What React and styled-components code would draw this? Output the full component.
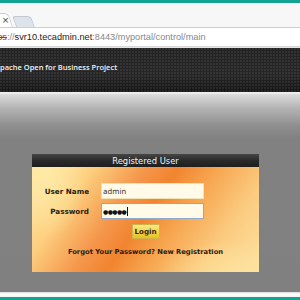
import React from 'react';
import styled, { createGlobalStyle } from 'styled-components';

const Global = createGlobalStyle`
  html, body { margin: 0; padding: 0; }
  body { width: 300px; height: 300px; overflow: hidden; background: #808080; }
`;

const Screen = styled.div`
  width: 300px;
  height: 300px;
  display: flex;
  flex-direction: column;
  overflow: hidden;
`;

const TealBar = styled.div`
  height: ${p => p.h}px;
  background: #14a391;
  flex-shrink: 0;
`;

const TabStrip = styled.div`
  height: 24px;
  background: #f7f7f7;
  display: flex;
  align-items: flex-end;
  border-bottom: 1px solid #cfcfcf;
  flex-shrink: 0;
`;

const ActiveTab = styled.div`
  width: 14px;
  height: 13px;
  background: #ffffff;
  border: 1px solid #c9c9c9;
  border-left: none;
  border-bottom: none;
  border-top-right-radius: 5px;
  transform: skewX(18deg);
  transform-origin: bottom left;
  margin-left: -2px;
  position: relative;
`;

const Close = styled.span`
  position: absolute;
  left: 6px;
  top: 1px;
  transform: skewX(-18deg);
  font: 9px "DejaVu Sans", sans-serif;
  color: #444;
`;

const GhostTab = styled.div`
  width: 17px;
  height: 10px;
  margin-left: 3px;
  background: #dde3ea;
  border: 1px solid #c3c9d1;
  border-bottom: none;
  border-radius: 3px 4px 0 0;
  transform: skewX(20deg);
  transform-origin: bottom left;
`;

const AddressBar = styled.div`
  height: 18px;
  background: #ffffff;
  border-bottom: 1px solid #d6d6d6;
  display: flex;
  align-items: center;
  flex-shrink: 0;
  font: 9.2px "Liberation Sans", Arial, sans-serif;
  white-space: nowrap;
  overflow: hidden;
`;

const Url = styled.div`
  margin-left: -13px;
  color: #888;
`;

const Scheme = styled.span`
  color: #c8201e;
  text-decoration: line-through;
`;

const Host = styled.span`
  color: #222;
`;

const ChromeGap = styled.div`
  height: 1px;
  background: #e4e4e4;
  flex-shrink: 0;
`;

const PageHeader = styled.div`
  height: 46px;
  flex-shrink: 0;
  background:
    radial-gradient(circle at 1px 1px, rgba(255,255,255,0.07) 0.8px, transparent 1.2px) 0 0 / 3px 3px,
    linear-gradient(#222 0%, #262626 60%, #151515 100%);
  border-bottom: 2px solid #ececec;
  display: flex;
  align-items: flex-start;
  padding-top: 14px;
  box-sizing: border-box;
`;

const SiteTitle = styled.div`
  margin-left: -5px;
  color: #f2f2f2;
  font: 600 7.5px "Open Sans", sans-serif;
  white-space: nowrap;
`;

const Body = styled.div`
  flex: 1;
  background: linear-gradient(#dcdcdc 0px, #b4b4b4 14px, #8e8e8e 32px, #818181 45px, #808080 100%);
  padding-top: 60px;
  box-sizing: border-box;
`;

const Panel = styled.div`
  margin-left: 32px;
  width: 227px;
  display: flex;
  flex-direction: column;
`;

const PanelHead = styled.div`
  height: 13px;
  background: linear-gradient(#464646, #2a2a2a 50%, #1e1e1e);
  color: #f4f4f4;
  font: 8.4px "DejaVu Sans", Verdana, sans-serif;
  display: flex;
  align-items: center;
  justify-content: center;
`;

const PanelBody = styled.div`
  height: 105px;
  box-sizing: border-box;
  padding-top: 16px;
  background:
    radial-gradient(ellipse 60px 90px at 6% 8%, rgba(255, 234, 166, 0.95), transparent 70%),
    radial-gradient(ellipse 120px 40px at 95% 98%, rgba(253, 226, 156, 0.9), transparent 75%),
    linear-gradient(125deg, #fee6a4 0%, #fdd080 20%, #f5974c 38%, #f1842f 49%, #f7a650 62%, #fbcb80 80%, #fde1a0 100%);
  display: flex;
  flex-direction: column;
  align-items: center;
`;

const Form = styled.div`
  display: grid;
  grid-template-columns: 57px 103px;
  column-gap: 12px;
  row-gap: 4px;
  align-items: center;
  align-self: flex-start;
`;

const Label = styled.label`
  text-align: right;
  font: bold 7.2px "DejaVu Sans", Verdana, sans-serif;
  color: #2a1c10;
`;

const Field = styled.div`
  height: 16px;
  box-sizing: border-box;
  background: #fffbe8;
  border: 1px solid ${p => (p.focused ? '#8ea9cc' : '#f1e3b8')};
  display: flex;
  align-items: center;
  padding-left: 1px;
  font: 7.4px "DejaVu Sans", Verdana, sans-serif;
  color: #333;
`;

const Caret = styled.span`
  display: inline-block;
  width: 1px;
  height: 9px;
  background: #111;
  margin-left: 1px;
`;

const Dots = styled.span`
  font-size: 6px;
  letter-spacing: -0.6px;
  color: #111;
`;

const LoginButton = styled.button`
  margin-top: 5px;
  width: 28px;
  height: 15px;
  padding: 0;
  border: 1px solid #d2b24a;
  background: linear-gradient(#fbea86, #f2d444 55%, #e6c224);
  font: bold 7.2px "DejaVu Sans", Verdana, sans-serif;
  color: #3a2a10;
`;

const Links = styled.div`
  margin-top: 9px;
  font: bold 6.75px "DejaVu Sans", Verdana, sans-serif;
  color: #2a1c10;
  white-space: nowrap;
`;

const Footer = styled.div`
  height: 5px;
  background: linear-gradient(#d8d8d8, #ffffff 40%, #f2f2f2);
  flex-shrink: 0;
`;

export default function App() {
  return (
    <Screen>
      <Global />
      <TealBar h={3} />
      <TabStrip>
        <ActiveTab>
          <Close>×</Close>
        </ActiveTab>
        <GhostTab />
      </TabStrip>
      <AddressBar>
        <Url>
          <Scheme>https</Scheme>://<Host>svr10.tecadmin.net</Host>:8443/myportal/control/main
        </Url>
      </AddressBar>
      <ChromeGap />
      <PageHeader>
        <SiteTitle>Apache Open for Business Project</SiteTitle>
      </PageHeader>
      <Body>
        <Panel>
          <PanelHead>Registered User</PanelHead>
          <PanelBody>
            <Form>
              <Label>User Name</Label>
              <Field>admin</Field>
              <Label>Password</Label>
              <Field focused>
                <Dots>●●●●●</Dots>
                <Caret />
              </Field>
            </Form>
            <LoginButton>Login</LoginButton>
            <Links>Forgot Your Password? New Registration</Links>
          </PanelBody>
        </Panel>
      </Body>
      <Footer />
      <TealBar h={3} />
    </Screen>
  );
}
